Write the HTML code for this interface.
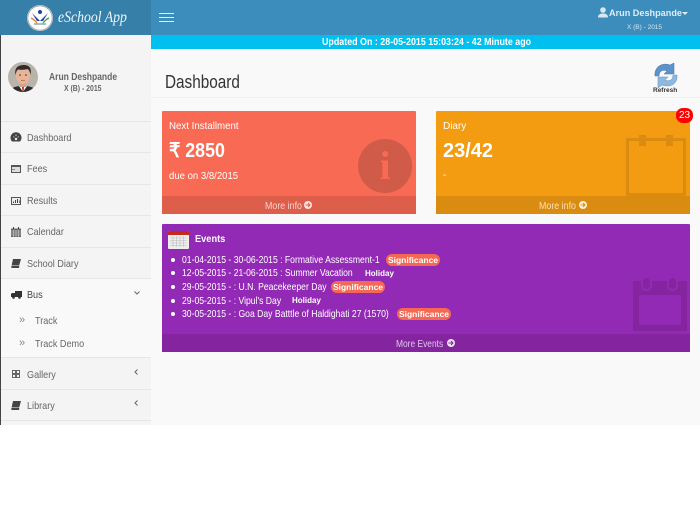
<!DOCTYPE html>
<html><head><meta charset="utf-8"><style>
html,body{margin:0;padding:0;width:700px;height:525px;overflow:hidden;background:#fff;font-family:"Liberation Sans",sans-serif}
#r{position:relative;width:700px;height:525px;overflow:hidden}
.a,.t,.l{position:absolute}
.t{white-space:nowrap;line-height:14px;margin-top:1px;transform:scaleX(var(--s,1));transform-origin:0 50%}
.l{left:1px;width:150px;height:1px;background:#e6e6e6}
.m{font-size:10.5px;color:#666;left:27px;--s:.865}
svg{position:absolute;overflow:visible}
.sig{position:absolute;height:12px;line-height:12px;border-radius:7px;background:#f56954;color:#fff;font-size:8.5px;font-weight:bold;text-align:center;width:54px}
.hol{position:absolute;color:#fff;font-size:8px;font-weight:bold;white-space:nowrap;line-height:12px}
.ev{font-size:10.5px;color:#fff;left:182px;--s:.82}
.dot{position:absolute;left:171px;width:4px;height:4px;border-radius:2px;background:#fff}
</style></head><body><div id="r">
<div class="a" style="left:0;top:0;width:151px;height:35px;background:#367fa9"></div>
<div class="a" style="left:151px;top:0;width:549px;height:35px;background:#3c8dbc"></div>
<div class="a" style="left:151px;top:35px;width:549px;height:14px;background:#00c0ef"></div>
<div class="a" style="left:151px;top:49px;width:549px;height:376px;background:#f9f9f9"></div>
<div class="a" style="left:151px;top:97px;width:549px;height:1px;background:#f0f0f0"></div>
<div class="a" style="left:0;top:35px;width:151px;height:390px;background:#f4f4f4"></div>
<div class="a" style="left:0;top:35px;width:1px;height:390px;background:#444"></div>
<div class="a" style="left:1px;top:279px;width:150px;height:78px;background:#f9f9f9"></div>

<!-- logo -->
<svg style="left:27px;top:5px" width="26" height="26" viewBox="0 0 26 26"><circle cx="13" cy="13" r="13" fill="#f2f2ee"/><circle cx="13" cy="13" r="12.2" fill="#fff" stroke="#999" stroke-width=".8"/><path d="M5 8l8 8 8-8-5 8h-6z" fill="#23409a"/><circle cx="13" cy="7" r="2" fill="#23409a"/><path d="M4 13q4 2 6 5" stroke="#e8862a" stroke-width="1.5" fill="none"/><path d="M22 13q-4 2-6 5" stroke="#4aa64a" stroke-width="1.5" fill="none"/><path d="M7 19h12" stroke="#8aa" stroke-width="1.5"/></svg>
<div class="t" style="left:58px;top:8px;font-family:'Liberation Serif',serif;font-style:italic;font-size:16px;line-height:18px;color:#eef6fa;--s:.86">eSchool App</div>
<!-- hamburger -->
<div class="a" style="left:159px;top:13px;width:15px;height:1.4px;background:#e8f1f6"></div>
<div class="a" style="left:159px;top:17px;width:15px;height:1.4px;background:#e8f1f6"></div>
<div class="a" style="left:159px;top:21px;width:15px;height:1.4px;background:#e8f1f6"></div>
<!-- user -->
<svg style="left:598px;top:7px" width="10" height="11" viewBox="0 0 10 11"><circle cx="5" cy="3" r="2.8" fill="#d8e8f1"/><path d="M0 10.5c0-3 2-3.5 3.5-4h3c1.5.5 3.5 1 3.500 4z" fill="#d8e8f1"/></svg>
<div class="t" style="left:609px;top:6px;font-size:9.5px;font-weight:bold;color:#e0ecf3;--s:.96">Arun Deshpande</div>
<div class="a" style="left:682px;top:12px;border:3px solid transparent;border-top-color:#e0ecf3"></div>
<div class="t" style="left:627px;top:20px;font-size:6.5px;color:#d5e5ef">X (B) - 2015</div>
<!-- updated -->
<div class="t" style="left:322px;top:34px;font-size:10.5px;font-weight:bold;color:#fff;--s:.847">Updated On : 28-05-2015 15:03:24 - 42 Minute ago</div>
<!-- avatar -->
<svg style="left:8px;top:62px" width="30" height="30" viewBox="0 0 30 30"><defs><clipPath id="c"><circle cx="15" cy="15" r="15"/></clipPath></defs><g clip-path="url(#c)"><rect width="30" height="30" fill="#b9b4ab"/><path d="M3 30c0-5 5-6 12-6s12 1 12 6z" fill="#2c2c30"/><path d="M11 24l4 6 4-6z" fill="#fff"/><path d="M14 25h2l-.5 5h-1z" fill="#c22"/><rect x="12" y="18" width="6" height="7" fill="#d9a183"/><ellipse cx="15" cy="13.5" rx="7" ry="8.5" fill="#e8b497"/><path d="M7.500 13C6 5 11 3 16 3s8 3 6.500 10c-.5-4-2-5.500-3-6-3 1-8 1-9.500.5-1.500 1-2 3-2.500 5.500z" fill="#332c2a"/><circle cx="12" cy="13" r=".8" fill="#333"/><circle cx="18" cy="13" r=".8" fill="#333"/><path d="M13 18.5h4" stroke="#a65" stroke-width=".7"/></g></svg>
<div class="t" style="left:49px;top:69px;font-size:10.5px;font-weight:bold;color:#666;--s:.81">Arun Deshpande</div>
<div class="t" style="left:64px;top:80px;font-size:8.5px;font-weight:bold;color:#666;--s:.81">X (B) - 2015</div>

<!-- lines -->
<div class="l" style="top:121px"></div><div class="l" style="top:152px"></div><div class="l" style="top:184px"></div><div class="l" style="top:215px"></div><div class="l" style="top:247px"></div><div class="l" style="top:278px"></div><div class="l" style="top:357px"></div><div class="l" style="top:389px"></div><div class="l" style="top:420px"></div>

<!-- menu icons -->
<svg style="left:11px;top:133px" width="10" height="9" viewBox="0 0 10 9"><path d="M1 8.5A5.500 5.500 0 1 1 9 8.500z" fill="#444"/><circle cx="5" cy="6" r="1.200" fill="#eee"/><path d="M2.500 3.500l.8.8M7.500 3.500l-.8.8M5 1.500v1.500" stroke="#eee" stroke-width=".8"/></svg>
<svg style="left:11px;top:165px" width="10" height="8" viewBox="0 0 10 8"><rect width="10" height="8" fill="#555"/><rect x="1" y="2" width="8" height="5" fill="#ddd"/><rect x="1" y="4" width="3" height="1" fill="#888"/></svg>
<svg style="left:11px;top:197px" width="10" height="8" viewBox="0 0 10 8"><rect x=".5" y=".5" width="9" height="7" fill="#eee" stroke="#555"/><path d="M2 6h1V4.500H2zM4 6h1V3H4zM6 6h1V2H6zM8 6h.7V3.500H8z" fill="#444"/></svg>
<svg style="left:11px;top:227px" width="10" height="10" viewBox="0 0 10 10"><rect y="1.500" width="10" height="8.500" fill="#666"/><path d="M2 0h1v2H2zM7 0h1v2H7z" fill="#444"/><path d="M0 4h10M0 6h10M0 8h10M2.500 3v7M5 3v7M7.500 3v7" stroke="#ddd" stroke-width=".5"/></svg>
<svg style="left:11px;top:259px" width="10" height="9" viewBox="0 0 10 9"><path d="M2 0h8L8.200 6.500H.6zM1 7h7.300L8 9H1.200C0 9-.2 7 1 7z" fill="#444"/></svg>
<svg style="left:11px;top:291px" width="11" height="8" viewBox="0 0 11 8"><path d="M4 0h7v6H4zM0 3l1-1h3v4H0z" fill="#333"/><circle cx="2.500" cy="6.500" r="1.300" fill="#333"/><circle cx="8.500" cy="6.500" r="1.300" fill="#333"/></svg>
<svg style="left:12px;top:370px" width="8" height="8" viewBox="0 0 8 8"><path d="M.5.500h3v3h-3zM4.500.500h3v3h-3zM.5 4.500h3v3h-3zM4.500 4.500h3v3h-3z" fill="none" stroke="#666"/></svg>
<svg style="left:11px;top:401px" width="10" height="9" viewBox="0 0 10 9"><path d="M2 0h8L8.200 6.500H.6zM1 7h7.300L8 9H1.200C0 9-.2 7 1 7z" fill="#444"/></svg>

<div class="t m" style="top:130px">Dashboard</div>
<div class="t m" style="top:161px">Fees</div>
<div class="t m" style="top:193px">Results</div>
<div class="t m" style="top:224px">Calendar</div>
<div class="t m" style="top:256px">School Diary</div>
<div class="t m" style="top:287px;color:#444">Bus</div>
<div class="t m" style="top:313px;left:35px">Track</div>
<div class="t m" style="top:336px;left:35px">Track Demo</div>
<div class="t m" style="top:367px">Gallery</div>
<div class="t m" style="top:398px">Library</div>
<div class="t" style="left:19px;top:312px;font-size:11px;color:#888">»</div>
<div class="t" style="left:19px;top:335px;font-size:11px;color:#888">»</div>
<svg style="left:134px;top:291px" width="6" height="4"><path d="M.5 .5L3 3l2.500-2.500" stroke="#666" fill="none"/></svg>
<svg style="left:134px;top:369px" width="4" height="6"><path d="M3.500 .5L1 3l2.500 2.500" stroke="#666" fill="none"/></svg>
<svg style="left:134px;top:400px" width="4" height="6"><path d="M3.500 .5L1 3l2.500 2.500" stroke="#666" fill="none"/></svg>

<!-- title -->
<div class="t" style="left:165px;top:71px;font-size:18px;line-height:20px;color:#333;--s:.85">Dashboard</div>
<!-- refresh -->
<svg style="left:654px;top:63px" width="24" height="25" viewBox="0 0 24 25"><path d="M1 13C0 4 8-1 16 2l4-2v11h-10l3-3C9 6 5 8 5 13z" fill="#5c93cc" stroke="#3f74ab" stroke-width=".5"/><path d="M23 12c1 9-7 13-15 10l-4 3V14h10l-3 3c4 2 8 0 8-5z" fill="#8db8e2" stroke="#5c8fc4" stroke-width=".5"/></svg>
<div class="t" style="left:653px;top:83px;font-size:6.5px;font-weight:bold;color:#333">Refresh</div>

<!-- red card -->
<div class="a" style="left:162px;top:111px;width:254px;height:103px;background:#f96a54;border-radius:1px"></div>
<div class="a" style="left:162px;top:196px;width:254px;height:18px;background:#dc5e4b"></div>
<div class="a" style="left:358px;top:139px;width:54px;height:54px;border-radius:27px;background:#d05b48"></div>
<div class="a" style="left:358px;top:139px;width:54px;text-align:center;font-family:'Liberation Serif',serif;font-weight:bold;font-size:40px;line-height:54px;color:#f96a54">i</div>
<div class="t" style="left:169px;top:118px;font-size:10.5px;color:#fff;--s:.925">Next Installment</div>
<div class="t" style="left:169px;top:139px;font-size:20px;line-height:22px;font-weight:bold;color:#fff;--s:.89">₹ 2850</div>
<div class="t" style="left:169px;top:168px;font-size:10.5px;color:#fff;--s:.91">due on 3/8/2015</div>
<div class="t" style="left:265px;top:198px;font-size:10.5px;color:#f8d5cf;--s:.845">More info</div>
<svg style="left:304px;top:201px" width="8" height="8" viewBox="0 0 8 8"><circle cx="4" cy="4" r="4" fill="#fbe3df"/><path d="M1.500 4h4M4 2l2 2-2 2" stroke="#dc5e4b" fill="none"/></svg>

<!-- orange card -->
<div class="a" style="left:436px;top:111px;width:254px;height:103px;background:#f39c12;border-radius:1px"></div>
<div class="a" style="left:436px;top:196px;width:254px;height:18px;background:#da8c10"></div>
<svg style="left:625px;top:135px" width="62" height="62" viewBox="0 0 62 62"><rect x="2.500" y="4.500" width="57" height="55" fill="none" stroke="#da8c10" stroke-width="3"/><rect x="14" y="0" width="7" height="11" fill="#da8c10"/><rect x="41" y="0" width="7" height="11" fill="#da8c10"/></svg>
<div class="a" style="left:676px;top:108px;width:17px;height:15px;border-radius:7px;background:#f00;color:#fff;font-size:10px;line-height:15px;text-align:center">23</div>
<div class="t" style="left:443px;top:118px;font-size:10.5px;color:#fff;--s:.95">Diary</div>
<div class="t" style="left:443px;top:139px;font-size:20px;line-height:22px;font-weight:bold;color:#fff">23/42</div>
<div class="t" style="left:443px;top:168px;font-size:10px;color:#fff">-</div>
<div class="t" style="left:539px;top:198px;font-size:10.5px;color:#f9e0b8;--s:.845">More info</div>
<svg style="left:579px;top:201px" width="8" height="8" viewBox="0 0 8 8"><circle cx="4" cy="4" r="4" fill="#fdf0da"/><path d="M1.500 4h4M4 2l2 2-2 2" stroke="#da8c10" fill="none"/></svg>

<!-- events -->
<div class="a" style="left:162px;top:224px;width:528px;height:128px;background:#932ab6;border-radius:1px"></div>
<div class="a" style="left:162px;top:334px;width:528px;height:18px;background:#84259f"></div>
<svg style="left:633px;top:277px" width="54" height="54" viewBox="0 0 54 54"><path fill-rule="evenodd" d="M0 4h54v50H0zM6 18v30h42V18z" fill="#84259f"/><rect x="9" y="0" width="9" height="13" rx="4.500" fill="#84259f" stroke="#932ab6" stroke-width="2"/><rect x="35" y="0" width="9" height="13" rx="4.500" fill="#84259f" stroke="#932ab6" stroke-width="2"/></svg>
<svg style="left:168px;top:231px" width="21" height="18" viewBox="0 0 21 18"><rect width="21" height="18" rx="1" fill="#eee"/><path d="M1 0h19q1 0 1 1v3H0V1q0-1 1-1z" fill="#c5281c"/><path d="M2 7h17M2 9.500h17M2 12h17M2 14.500h17M5 5v11M8.500 5v11M12 5v11M15.500 5v11" stroke="#bbb" stroke-width=".6"/></svg>
<div class="t" style="left:195px;top:231px;font-size:10.5px;font-weight:bold;color:#fff;--s:.88">Events</div>

<div class="dot" style="top:258px"></div>
<div class="dot" style="top:271px"></div>
<div class="dot" style="top:285px"></div>
<div class="dot" style="top:299px"></div>
<div class="dot" style="top:312px"></div>
<div class="t ev" style="top:252px">01-04-2015 - 30-06-2015 : Formative Assessment-1</div>
<div class="t ev" style="top:265px">12-05-2015 - 21-06-2015 : Summer Vacation</div>
<div class="t ev" style="top:279px">29-05-2015 - : U.N. Peacekeeper Day</div>
<div class="t ev" style="top:293px">29-05-2015 - : Vipul's Day</div>
<div class="t ev" style="top:306px">30-05-2015 - : Goa Day Batttle of Haldighati 27 (1570)</div>
<div class="sig" style="left:386px;top:254px">Significance</div>
<div class="hol" style="left:365px;top:268px">Holiday</div>
<div class="sig" style="left:331px;top:281px">Significance</div>
<div class="hol" style="left:292px;top:295px">Holiday</div>
<div class="sig" style="left:397px;top:308px">Significance</div>
<div class="t" style="left:396px;top:336px;font-size:10.5px;color:#e2c6ec;--s:.8">More Events</div>
<svg style="left:447px;top:339px" width="8" height="8" viewBox="0 0 8 8"><circle cx="4" cy="4" r="4" fill="#f0e2f5"/><path d="M1.500 4h4M4 2l2 2-2 2" stroke="#84259f" fill="none"/></svg>
</div></body></html>
